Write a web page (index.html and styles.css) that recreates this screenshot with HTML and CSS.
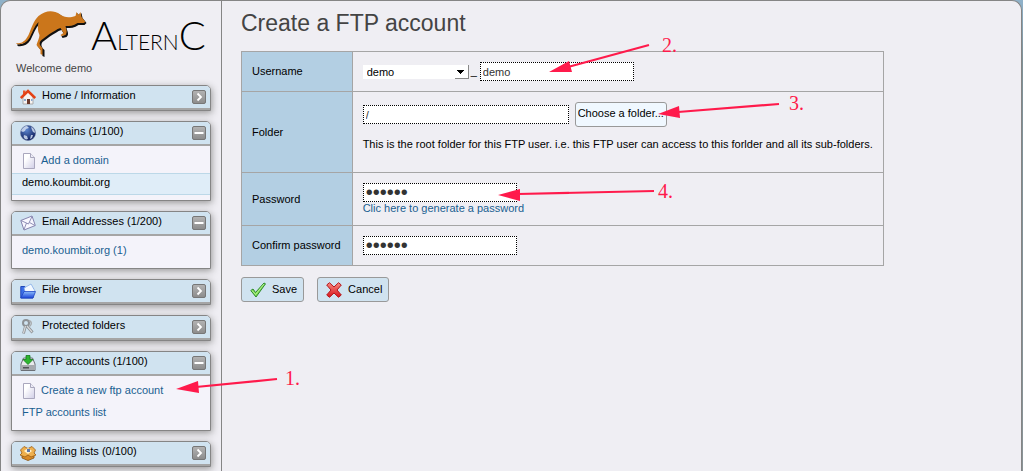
FILE: index.html
```html
<!DOCTYPE html>
<html lang="en">
<head>
<meta charset="utf-8">
<title>AlternC - Create a FTP account</title>
<link rel="stylesheet" href="styles.css">
</head>
<body>
<svg class="defs" width="0" height="0" aria-hidden="true">
  <defs>
    <linearGradient id="grey" x1="0" y1="0" x2="0" y2="1"><stop offset="0" stop-color="#b4b4b4"/><stop offset="1" stop-color="#8b8b8b"/></linearGradient>
    <linearGradient id="sheet" x1="0" y1="0" x2="1" y2="1"><stop offset="0.3" stop-color="#fff"/><stop offset="1" stop-color="#cfcde6"/></linearGradient>
    <linearGradient id="blue" x1="0" y1="0" x2="0" y2="1"><stop offset="0" stop-color="#8bbcfb"/><stop offset="1" stop-color="#1c46d8"/></linearGradient>
    <radialGradient id="globe" cx="0.4" cy="0.3" r="0.7"><stop offset="0" stop-color="#5c86cf"/><stop offset="1" stop-color="#10205f"/></radialGradient>
    <linearGradient id="red" x1="0" y1="0" x2="0" y2="1"><stop offset="0" stop-color="#f78a80"/><stop offset="1" stop-color="#d8131b"/></linearGradient>
    <symbol id="i-open" viewBox="0 0 14 14"><rect x=".5" y=".5" width="13" height="13" rx="1.5" fill="url(#grey)" stroke="#777"/><path d="M5.500 3.500 9 7l-3.500 3.500" fill="none" stroke="#fff" stroke-width="1.800"/></symbol>
    <symbol id="i-close" viewBox="0 0 14 14"><rect x=".5" y=".5" width="13" height="13" rx="1.5" fill="url(#grey)" stroke="#777"/><path d="M2.500 7h9" stroke="#fff" stroke-width="2"/></symbol>
    <symbol id="i-page" viewBox="0 0 14 16"><path d="M1.500.5h7l4 4v11h-11z" fill="url(#sheet)" stroke="#a9a7bd"/><path d="M8.500.5v4h4" fill="#eeedf8" stroke="#a9a7bd"/></symbol>
  </defs>
</svg>
<div class="frame">
  <aside class="sidebar">
    <a class="logo" href="#" aria-label="AlternC">
      <svg class="roo" viewBox="0 0 70 48" aria-hidden="true">
        <path d="M0 33C5 34 9 31 12 25C15 18 17 11 22 6C29 0 37 0 43 4C48 8 53 8 59 6L60 2L62 5L64 2L65 7L69 12L67 14L61 14C57 17 53 17 49 17C50 21 52 23 49 26L45 27L44 25L47 24L44 19C40 20 37 23 33 25L25 31C23 34 24 36 27 39L27 46L25 45L24 40L20 35C21 31 23 28 23 25C21 21 21 17 22 13C18 17 16 23 13 29C10 34 5 36 0 35Z" fill="#111" transform="translate(1 1)"/>
        <path d="M0 33C5 34 9 31 12 25C15 18 17 11 22 6C29 0 37 0 43 4C48 8 53 8 59 6L60 2L62 5L64 2L65 7L69 12L67 13L61 13C57 16 53 16 49 16C50 20 51 22 49 25L45 26L44 25L47 23L44 18C40 19 37 22 33 24L25 30C22 33 23 35 26 38L26 45L24 44L24 40L20 35C21 31 23 28 23 25C21 21 21 17 22 12C18 16 16 22 13 28C10 33 5 35 0 34Z" fill="#cb761b"/>
      </svg>
      <span class="wordmark"><span class="tall">A</span>LTERN<span class="tall">C</span></span>
    </a>
    <p class="welcome">Welcome demo</p>
    <nav class="menu">
      <section class="box">
        <h2 class="box-head">
          <svg class="icon" viewBox="0 0 16 16"><path d="M3 8v7h10V8L8 3z" fill="#f7f3f1" stroke="#aaa"/><path d="M3 1.500h2.500V5H3z" fill="#e8562c"/><path d="M.8 9 8 2l7.200 7" fill="none" stroke="#e34216" stroke-width="2.600"/><path d="M7 10h3v5H7z" fill="#6b3a2c"/><path d="M4 10h2v2H4zM11 10h1.500v2H11z" fill="#8ea8cd"/></svg>
          <a href="#">Home / Information</a><button class="toggle" aria-label="Expand Home"><svg><use href="#i-open"/></svg></button></h2>
      </section>
      <section class="box">
        <h2 class="box-head">
          <svg class="icon" viewBox="0 0 16 16"><circle cx="8" cy="8" r="7.500" fill="url(#globe)" stroke="#5f6f98" stroke-width=".6"/><path d="M1 6C2 3 5 1 7 1l2 2-3 1-1 2-2 1zM11 2c3 1 4 4 4 6l-2-1-1-2zM4 10l3 1 1 3-2 .5C4 13.500 3 12 4 10zM11 10l2 0-1 3-2 1z" fill="#d5e0f3" opacity=".85"/></svg>
          <a href="#">Domains (1/100)</a><button class="toggle" aria-label="Collapse Domains"><svg><use href="#i-close"/></svg></button></h2>
        <ul class="items">
          <li><a href="#"><svg class="page"><use href="#i-page"/></svg>Add a domain</a></li>
          <li class="current"><a href="#">demo.koumbit.org</a></li>
        </ul>
      </section>
      <section class="box">
        <h2 class="box-head">
          <svg class="icon" viewBox="0 0 16 16"><path d="M.8 5.500 12 1l3.300 9.500L4 15z" fill="#f8f7ff" stroke="#8583ae"/><path d="M1 5.500 8.500 9 12 1.500M4 14.500l2.500-6.500M15 10.500 9.500 7.500" fill="none" stroke="#8583ae" stroke-width=".9"/></svg>
          <a href="#">Email Addresses (1/200)</a><button class="toggle" aria-label="Collapse Email Addresses"><svg><use href="#i-close"/></svg></button></h2>
        <ul class="items"><li><a href="#">demo.koumbit.org (1)</a></li></ul>
      </section>
      <section class="box">
        <h2 class="box-head">
          <svg class="icon" viewBox="0 0 16 16"><path d="M.8 15V3.500h4l1 1.500H13v10z" fill="#3c6fe8" stroke="#2048b8"/><path d="m4 5 7-4 4 7-9 4z" fill="#f3f9ff" stroke="#7aa6e6" stroke-width=".7"/><path d="M.8 15 4 8.500h11.500L13 15z" fill="url(#blue)" stroke="#1f47c4" stroke-width=".8"/></svg>
          <a href="#">File browser</a><button class="toggle" aria-label="Expand File browser"><svg><use href="#i-open"/></svg></button></h2>
      </section>
      <section class="box">
        <h2 class="box-head">
          <svg class="icon" viewBox="0 0 16 16"><g fill="none" stroke="#8d9195"><circle cx="6" cy="4" r="3" stroke-width="2"/><path d="m5.500 7-2 7.500M7 7l5.500 6.500" stroke-width="2.800"/></g><path d="m5.500 7-2 7M7 7l5 6" stroke="#d7d9db" stroke-width="1.200"/><path d="M9 1.500c3 1 3 4 .5 6" fill="none" stroke="#a9acae" stroke-width="1.500"/></svg>
          <a href="#">Protected folders</a><button class="toggle" aria-label="Expand Protected folders"><svg><use href="#i-open"/></svg></button></h2>
      </section>
      <section class="box">
        <h2 class="box-head">
          <svg class="icon" viewBox="0 0 16 16"><path d="M3.500 3h9l2.500 6v6.500H1V9z" fill="#e8eaec" stroke="#6b6f75"/><path d="M1.500 10h13v5h-13z" fill="#a5a9ae"/><path d="M3 12h6v1.500H3z" fill="#4e5256"/><path d="M6 .5h4v4h3l-5 5-5-5h3z" fill="#2cb62f" stroke="#137a1c" stroke-width=".8"/></svg>
          <a href="#">FTP accounts (1/100)</a><button class="toggle" aria-label="Collapse FTP accounts"><svg><use href="#i-close"/></svg></button></h2>
        <ul class="items">
          <li><a href="#"><svg class="page"><use href="#i-page"/></svg>Create a new ftp account</a></li>
          <li><a href="#">FTP accounts list</a></li>
        </ul>
      </section>
      <section class="box">
        <h2 class="box-head">
          <svg class="icon" viewBox="0 0 16 16"><path d="m2 8 6 2 6-2v5l-6 2.500L2 13z" fill="#d98a26" stroke="#87500f" stroke-width=".8"/><path d="M2 8 .5 5 4 1.500l4 2 4-2L15.500 5 14 8l2 2-5 2-3-2-3 2-5-2z" fill="#eeb04e" stroke="#9a5d14" stroke-width=".8"/><path d="m4 6 4-3 4 3-4 3z" fill="#fff3cf"/><path d="M7 4h3v3H7z" fill="#5a77ac"/></svg>
          <a href="#">Mailing lists (0/100)</a><button class="toggle" aria-label="Expand Mailing lists"><svg><use href="#i-open"/></svg></button></h2>
      </section>
    </nav>
  </aside>
  <main class="content">
    <h1>Create a FTP account</h1>
    <form>
      <table class="form">
        <tr>
          <th scope="row"><label for="login">Username</label></th>
          <td><div class="line"><select class="prefix" aria-label="Prefix"><option>demo</option></select><span class="sep">_</span><input class="field" type="text" id="login" value="demo"></div></td>
        </tr>
        <tr>
          <th scope="row"><label for="dir">Folder</label></th>
          <td><div class="line folder"><input class="field wide" type="text" id="dir" value="/"><button class="choose" type="button">Choose a folder...</button></div>
            <p class="hint">This is the root folder for this FTP user. i.e. this FTP user can access to this forlder and all its sub-folders.</p></td>
        </tr>
        <tr>
          <th scope="row"><label for="pass">Password</label></th>
          <td><input class="field secret" type="password" id="pass" value="secret"><a class="generate" href="#">Clic here to generate a password</a></td>
        </tr>
        <tr>
          <th scope="row"><label for="conf">Confirm password</label></th>
          <td><input class="field secret" type="password" id="conf" value="secret"></td>
        </tr>
      </table>
      <div class="actions">
        <button class="action" type="button"><svg class="act-icon" viewBox="0 0 16 16"><path d="M.8 8.500 3 7l2.500 3.500L14 1l1.500.8L6 15z" fill="#7ddc50" stroke="#2c8a2c"/><path d="m2 8.500 3.500 4L14 2" fill="none" stroke="#c6f5a5" stroke-width=".8"/></svg>Save</button>
        <button class="action" type="button"><svg class="act-icon" viewBox="0 0 16 16"><path d="M3.500.7 8 5l4.500-4.300L15.300 3 11 8l4.300 5-2.800 2.300L8 11l-4.500 4.300L.7 13 5 8 .7 3z" fill="url(#red)" stroke="#b5161b"/></svg>Cancel</button>
      </div>
    </form>
  </main>
</div>
<svg class="notes" width="820" height="420" viewBox="0 0 820 420">
  <g stroke="#ff1a4b" stroke-width="2.200"><path d="M277 379 196 387M649 45 568 67M779 104 678 112M654 191 518 194"/></g>
  <g fill="#ff1a4b">
    <path d="m176 389 22-8 1 12zM549 72l20-11 3 11zM658 114l21-8 1 12zM498 195l22-6v12z"/>
    <g class="num"><text x="285" y="385">1.</text><text x="662" y="52">2.</text><text x="789" y="110">3.</text><text x="658" y="198">4.</text></g>
  </g>
</svg>
</body>
</html>
```
FILE: styles.css
```css
* { box-sizing: border-box; }
body {
  margin: 0;
  background: linear-gradient(#8fb2ca, #7f9299 60px, #8a9498);
  font: 11px/13px "Liberation Sans", Arial, sans-serif;
  color: #000;
}
a { color: #1a5f91; text-decoration: none; }
p { margin: 0; }
button, input, select { font: inherit; color: inherit; }
.defs { position: absolute; }

.frame {
  display: flex;
  min-height: 100vh;
  margin-right: 1px;
  border: 1px solid #858585;
  border-bottom: 0;
  border-radius: 10px 10px 0 0;
  background: #efeef3;
}
.sidebar {
  flex: none;
  width: 221px;
  padding: 9px 10px 0;
  border-right: 1px solid #858585;
}
.logo { display: flex; height: 50px; padding-left: 5px; color: #000; }
.roo { flex: none; width: 71px; height: 48px; }
.wordmark { padding-left: 4px; font: 300 21px/50px Lato, "Liberation Sans", sans-serif; white-space: nowrap; }
.tall { font-size: 40px; }
.welcome { padding: 2px 5px 0; color: #444; }

.menu { display: flex; flex-direction: column; gap: 10px; padding-top: 10px; }
.box {
  border: 1px solid #858585;
  border-radius: 5px 5px 0 0;
  background: #f4f3fa;
  box-shadow: 1px 2px 7px #999;
}
.box-head {
  display: flex;
  align-items: center;
  height: 24px;
  margin: 0;
  padding: 0 4px 0 8px;
  border-bottom: 2px solid #a5a5a5;
  border-radius: 4px 4px 0 0;
  background: #d0e3f0;
  font-size: 11px;
  font-weight: normal;
}
.box-head a { flex: 1; padding: 0 0 4px 6px; color: #000; }
.icon { flex: none; width: 16px; height: 16px; }
.toggle { width: 14px; height: 14px; padding: 0; border: 0; background: none; }
.toggle svg { display: block; width: 14px; height: 14px; }
.items { margin: 0; padding: 3px 0 5px; list-style: none; }
.items li { height: 22px; padding: 0 10px; line-height: 19px; }
.items li:first-child { height: 24px; line-height: 22px; }
.items a { display: flex; }
.page { width: 14px; height: 16px; margin: 4px 5px 0 0; }
.items .current { border: solid #bcd8e8; border-width: 1px 0; background: #dfedf8; line-height: 17px; }
.current a { color: #000; }

.content { flex: 1; padding: 8px 19px 0; }
h1 { margin: 0 0 14px; font-size: 23px; line-height: 28px; font-weight: normal; color: #444; }
.form { border-collapse: collapse; }
.form th, .form td { padding: 10px; border: 1px solid #a5a5a5; text-align: left; vertical-align: middle; }
.form th { padding-right: 11px; background: #b3cfe3; font-weight: normal; white-space: nowrap; }
.line { display: flex; align-items: center; }
.field {
  display: block;
  width: 154px;
  height: 19px;
  padding: 0 2px;
  border: 1px dotted #000;
  background: #fff;
  color: #333;
}
.wide { width: 206px; }
.secret { font-size: 20px; }
/* The first four layers draw the arrow, the next two the bevel of its button. */
.prefix {
  width: 106px;
  height: 14px;
  padding: 0 4px;
  border: 0;
  appearance: none;
  line-height: 14px;
  background:
    linear-gradient(#000, #000) 94px 5px / 7px 1px no-repeat,
    linear-gradient(#000, #000) 95px 6px / 5px 1px no-repeat,
    linear-gradient(#000, #000) 96px 7px / 3px 1px no-repeat,
    linear-gradient(#000, #000) 97px 8px / 1px 1px no-repeat,
    linear-gradient(#888, #888) 100% 0 / 1px 100% no-repeat,
    linear-gradient(#888, #888) 100% 100% / 14px 1px no-repeat,
    #fff;
}
.sep { padding: 0 3px 0 2px; }
.folder { gap: 6px; }
.choose {
  height: 25px;
  padding: 0 2px 2px;
  border: 1px solid #999;
  border-radius: 3px;
  background: #f0f8ff;
}
.hint { padding: 11px 0; }
.generate { display: block; }
.actions { display: flex; gap: 13px; padding-top: 11px; }
.action {
  display: flex;
  align-items: center;
  gap: 6px;
  height: 25px;
  padding: 0 6px 0 8px;
  border: 1px solid #999;
  border-radius: 3px;
  background: #d0e3f0;
}
.act-icon { width: 16px; height: 16px; }

.notes { position: absolute; top: 0; left: 0; pointer-events: none; }
.num { font: 20px "Liberation Serif", serif; }
```
